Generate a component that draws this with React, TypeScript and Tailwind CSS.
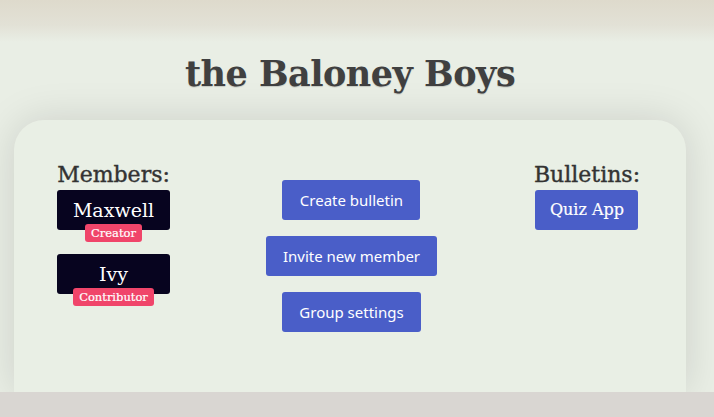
import React from "react";

const MEMBERS = [
  { name: "Maxwell", role: "Creator" },
  { name: "Ivy", role: "Contributor" },
];

const ACTIONS = ["Create bulletin", "Invite new member", "Group settings"];

export default function App() {
  return (
    <div className="flex h-[417px] w-full flex-col overflow-hidden bg-[linear-gradient(to_bottom,#dedacc_0px,#e2e1d6_25px,#e9eee5_42px,#e9eee5_100%)] pr-[14px]">
      {/* Title */}
      <div className="flex h-[120px] shrink-0 items-center justify-center pt-[28px]">
        <h1 className="font-['DejaVu_Serif',serif] text-[35px] font-bold tracking-[-0.5px] text-[#404040] [text-shadow:0_1px_1px_rgba(0,0,0,0.15)]">
          the Baloney Boys
        </h1>
      </div>

      {/* Group card */}
      <div className="ml-[14px] flex h-[272px] w-[672px] shrink-0 justify-between rounded-t-[30px] bg-[#e9efe5] pl-[43px] pr-[45px] pt-[40px] shadow-[0_0_40px_rgba(0,0,0,0.13)]">
        <div className="flex w-[113px] flex-col items-center">
          <h2 className="font-['DejaVu_Serif',serif] text-[22px] leading-[30px] text-[#333] [-webkit-text-stroke:0.4px_#333]">Members:</h2>
          {MEMBERS.map((m) => (
            <div key={m.name} className="mb-3 flex flex-col items-center">
              <div className="flex h-10 w-[113px] items-center justify-center rounded-[3px] bg-[#07041f] font-['DejaVu_Serif',serif] text-[19px] text-white">
                {m.name}
              </div>
              <span className="-mt-[6px] rounded-[3px] bg-[#f0456a] px-[6px] font-['DejaVu_Serif',serif] text-[11.5px] leading-[18px] text-white [-webkit-text-stroke:0.2px_#fff]">
                {m.role}
              </span>
            </div>
          ))}
        </div>

        <div className="flex flex-col items-center gap-4 pt-[20px]">
          {ACTIONS.map((a) => (
            <button
              key={a}
              className="h-10 min-w-[138px] rounded-[3px] bg-[#4a5ec8] px-[17px] font-['Noto_Sans',sans-serif] text-[15px] text-white"
            >
              {a}
            </button>
          ))}
        </div>

        <div className="flex w-[108px] flex-col items-center">
          <h2 className="font-['DejaVu_Serif',serif] text-[22px] leading-[30px] text-[#333] [-webkit-text-stroke:0.4px_#333]">Bulletins:</h2>
          <button className="h-10 w-[103px] rounded-[3px] bg-[#4a5ec8] font-['DejaVu_Serif',serif] text-[16px] text-white [-webkit-text-stroke:0.2px_#fff]">
            Quiz App
          </button>
        </div>
      </div>

      <div className="-mr-[14px] flex-1 bg-[#d9d6d2]" />
    </div>
  );
}
